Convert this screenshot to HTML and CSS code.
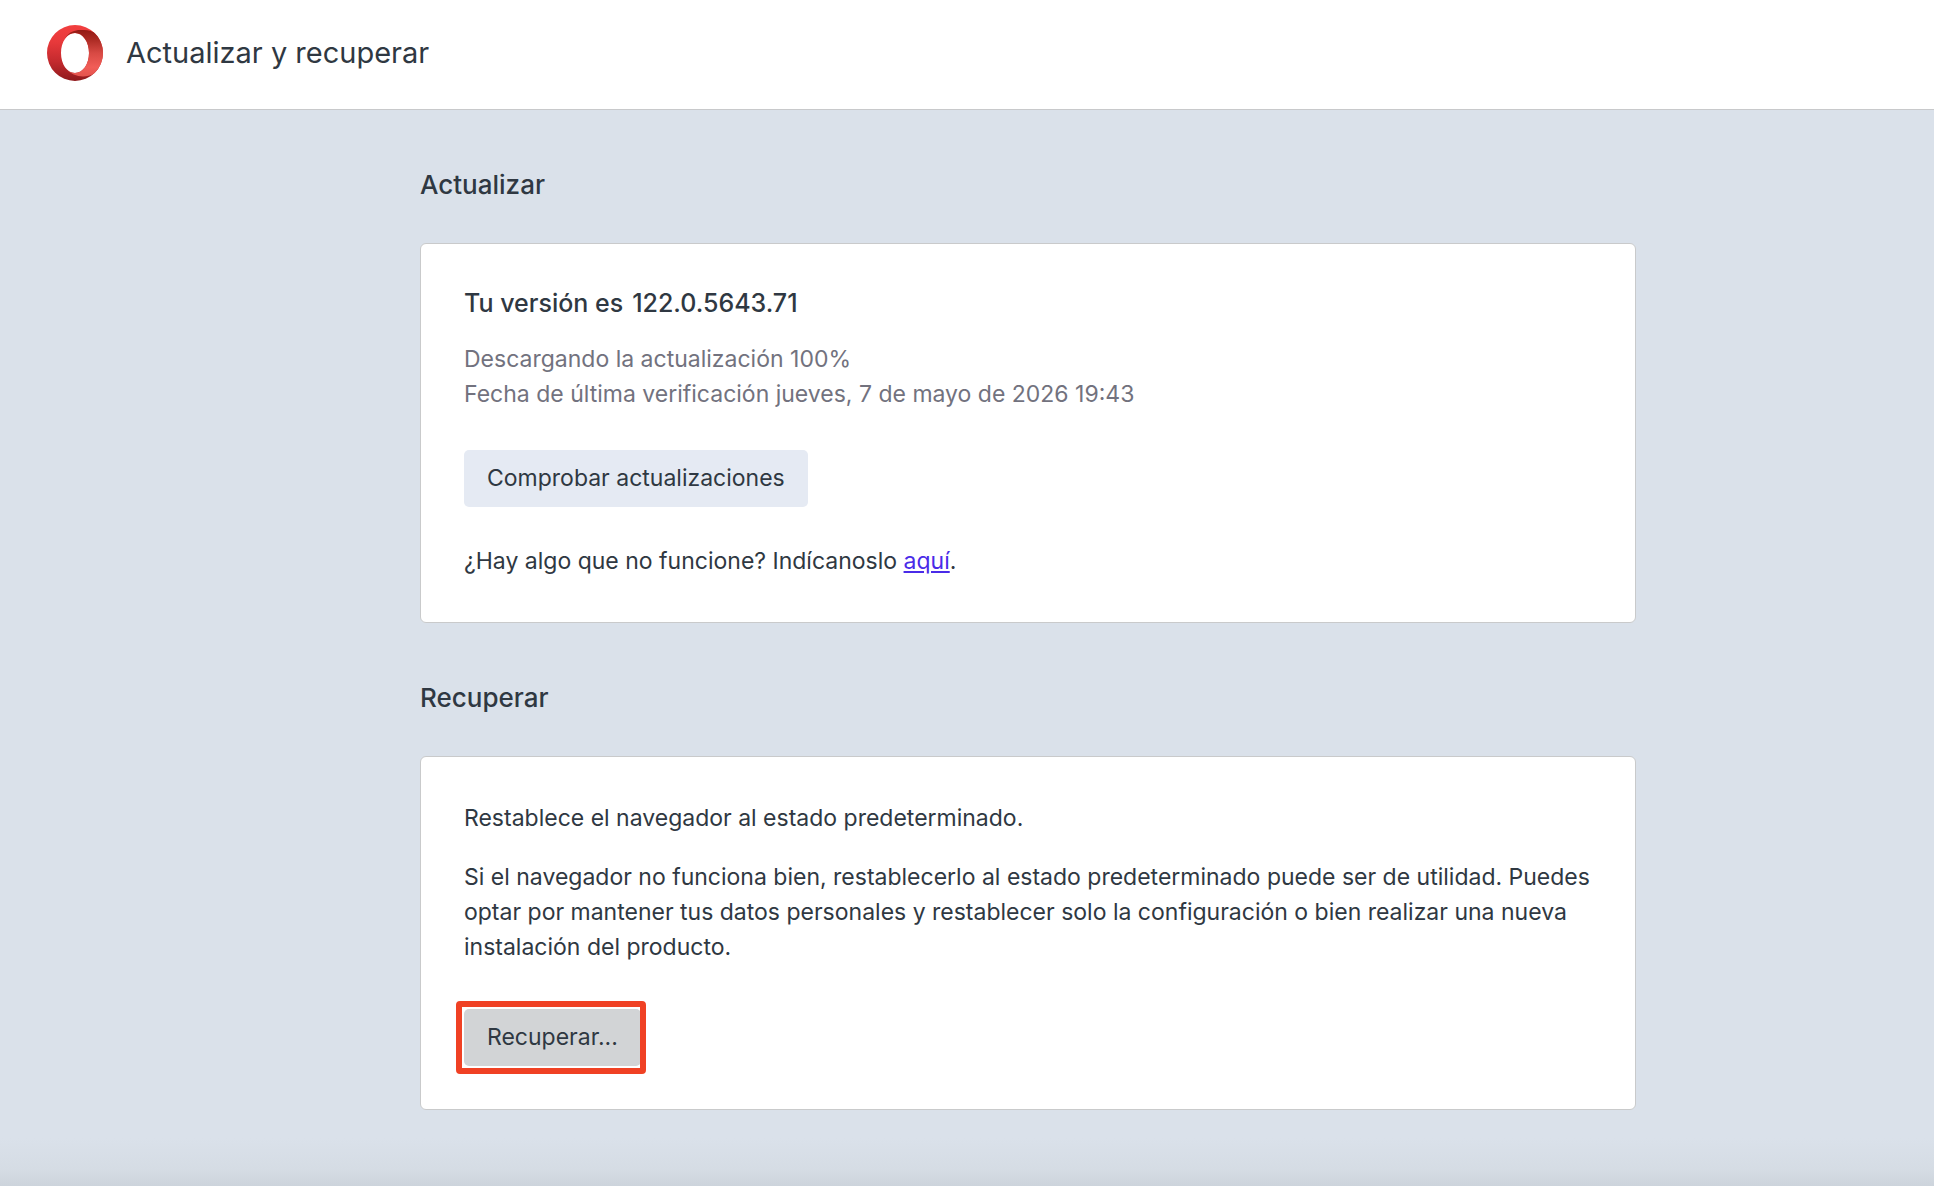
FILE: index.html
```html
<!DOCTYPE html>
<html lang="es">
  <head>
    <meta charset="UTF-8" />
    <meta name="viewport" content="width=device-width, initial-scale=1.0" />
    <title>Actualizar y recuperar</title>
    <link rel="stylesheet" href="styles.css" />
  </head>
  <body>
    <header class="header">
      <svg class="logo" viewBox="0 0 56 56" aria-hidden="true">
        <defs>
          <linearGradient id="ring" x1="0" y1="0" x2="0" y2="1">
            <stop offset="0" stop-color="#f23f3f" />
            <stop offset="0.3" stop-color="#e8393b" />
            <stop offset="0.65" stop-color="#c42a2e" />
            <stop offset="1" stop-color="#8f191c" />
          </linearGradient>
          <linearGradient id="fold" x1="0" y1="0" x2="0" y2="1">
            <stop offset="0" stop-color="#941a14" />
            <stop offset="0.2" stop-color="#ab2a23" />
            <stop offset="0.5" stop-color="#d84a44" />
            <stop offset="0.8" stop-color="#f15d57" />
            <stop offset="1" stop-color="#e4544e" />
          </linearGradient>
        </defs>
        <path
          fill="url(#ring)"
          fill-rule="evenodd"
          d="M28 0a28 28 0 1 0 0 56a28 28 0 1 0 0-56zM28 8c8 0 14 9 14 20s-6 20-14 20s-14-9-14-20s6-20 14-20z"
        />
        <path
          fill="url(#fold)"
          d="M18 13C22 7 28 5 33 5c5 0 10 0 13.700 2.300C52.500 12 56 20 56 28s-3.500 15.500-9.300 20.700C39 53 27 53 18 43c3 3.500 6.500 5 10 5c8 0 14-9 14-20S36 8 28 8c-3.500 0-7 1.500-10 5z"
        />
      </svg>
      <h1 class="header-title">Actualizar y recuperar</h1>
    </header>

    <main class="content">
      <section class="section">
        <h2 class="section-title">Actualizar</h2>
        <div class="card">
          <h3 class="version">
            <span>Tu versión es</span>
            <span>122.0.5643.71</span>
          </h3>
          <p class="status">
            Descargando la actualización 100%<br />
            Fecha de última verificación jueves, 7 de mayo de 2026 19:43
          </p>
          <button class="button" type="button">Comprobar actualizaciones</button>
          <p class="feedback">
            ¿Hay algo que no funcione? Indícanoslo <a class="link" href="#">aquí</a>.
          </p>
        </div>
      </section>

      <section class="section">
        <h2 class="section-title">Recuperar</h2>
        <div class="card">
          <p class="lead">Restablece el navegador al estado predeterminado.</p>
          <p class="description">
            Si el navegador no funciona bien, restablecerlo al estado
            predeterminado puede ser de utilidad. Puedes optar por mantener tus
            datos personales y restablecer solo la configuración o bien realizar
            una nueva instalación del producto.
          </p>
          <button class="button button-marked" type="button">Recuperar...</button>
        </div>
      </section>
    </main>
  </body>
</html>
```
FILE: styles.css
```css
* {
  box-sizing: border-box;
}

body {
  margin: 0;
  min-height: 100vh;
  /* Soft shade along the bottom edge */
  background: linear-gradient(to top, #cdd4dc 0, #d5dce4 16px, #dae1ea 48px);
  color: #2f3842;
  font-family: Inter, "Liberation Sans", sans-serif;
  font-size: 23px;
  line-height: 35px;
}

h1,
h2,
h3,
p {
  margin: 0;
}

/* Header */
.header {
  display: flex;
  align-items: center;
  gap: 23px;
  height: 110px;
  padding: 0 47px 4px;
  background: #fff;
  border-bottom: 1px solid #c8c9cb;
}

.logo {
  width: 56px;
  height: 56px;
}

.header-title {
  font-size: 29px;
  font-weight: 400;
}

/* Sections */
.content {
  max-width: 1338px;
  margin: 0 auto;
  padding-left: 122px;
}

.section {
  padding-top: 57px;
}

.section-title {
  margin-bottom: 40px;
  font-size: 26px;
  font-weight: 500;
  line-height: 36px;
}

.card {
  padding: 44px 43px 43px;
  background: #fff;
  border: 1px solid #c9cacb;
  border-radius: 6px;
}

/* Update card */
.version {
  display: flex;
  gap: 9px;
  margin-bottom: 24px;
  font-size: 25px;
  font-weight: 500;
  line-height: 30px;
}

.status {
  margin-bottom: 38px;
  color: #72727e;
}

.feedback {
  margin-top: 37px;
}

.link {
  color: #4a2be8;
}

/* Recovery card */
.lead {
  margin-bottom: 24px;
}

.description {
  margin-bottom: 44px;
}

.button {
  display: block;
  height: 57px;
  padding: 0 23px;
  background: #e5eaf3;
  border: 0;
  border-radius: 5px;
  color: inherit;
  font: inherit;
  cursor: pointer;
}

.button-marked {
  position: relative;
  background: #d2d4d6;
}

/* Red frame around the button */
.button-marked::after {
  content: "";
  position: absolute;
  inset: -8px -5px -8px -8px;
  border: 6px solid #f04124;
  border-radius: 4px;
}
```
